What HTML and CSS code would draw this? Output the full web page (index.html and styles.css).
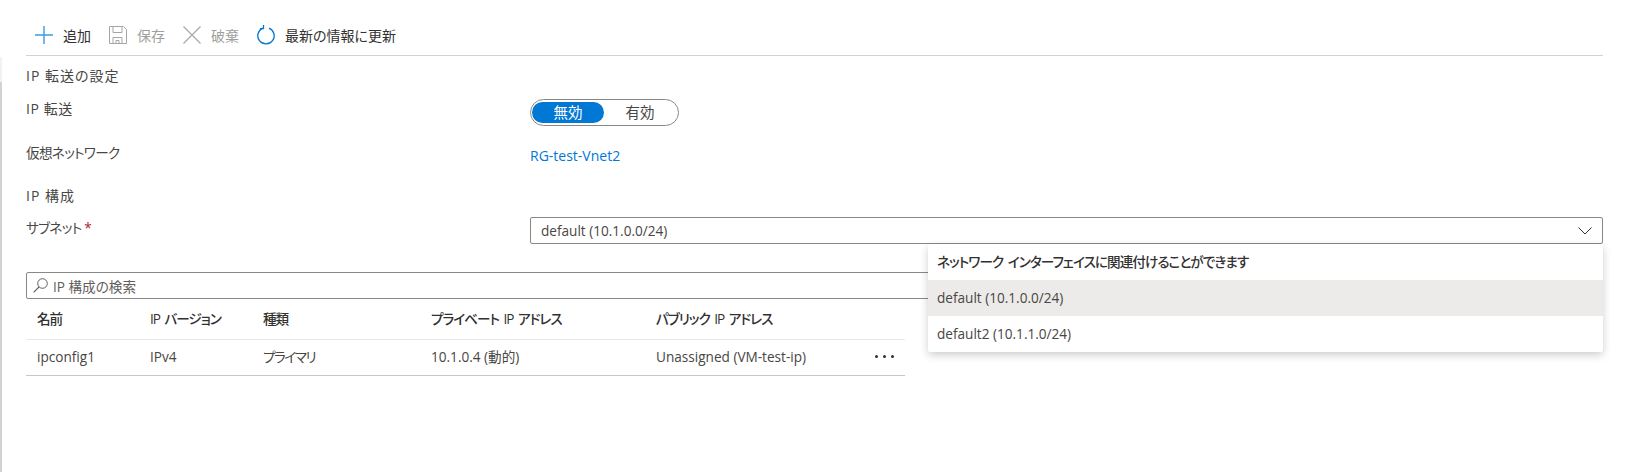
FILE: index.html
```html
<!DOCTYPE html>
<html lang="ja">
<head>
    <meta charset="UTF-8">
    <meta name="viewport" content="width=device-width, initial-scale=1.0">
    <title>IP 構成</title>
    <link rel="stylesheet" href="styles.css">
</head>
<body>
    <div class="side-edge"></div>
    <div class="blade">
        <div class="toolbar">
            <a class="tool">
                <svg width="18" height="18" viewBox="0 0 18 18"><path d="M9 0v18M0 9h18" fill="none" stroke="#3d9be0" stroke-width="1.4"/></svg>
                <span>追加</span>
            </a>
            <a class="tool disabled">
                <svg width="18" height="18" viewBox="0 0 18 18"><path d="M.5.5h14l3 3v14H.5zM4 .5v6h9v-6M4 17.500v-6h9v6M7 17.500v-3h3v3" fill="none" stroke="#a6a6a6" stroke-width="1"/></svg>
                <span>保存</span>
            </a>
            <a class="tool disabled">
                <svg width="18" height="18" viewBox="0 0 18 18"><path d="M.5.5l17 17M17.500.5l-17 17" fill="none" stroke="#a6a6a6" stroke-width="1.1"/></svg>
                <span>破棄</span>
            </a>
            <a class="tool">
                <svg width="18" height="20" viewBox="0 0 18 20"><path d="M12 3.100A8.200 8.200 0 1 1 6 3.100M6.500 0v3.600H2.900" fill="none" stroke="#0078d4" stroke-width="1.3"/></svg>
                <span>最新の情報に更新</span>
            </a>
        </div>

        <div class="section-title first">IP 転送の設定</div>
        <div class="field toggle-row">
            <label class="wide">IP 転送</label>
            <div class="toggle">
                <span class="toggle-opt on">無効</span>
                <span class="toggle-opt">有効</span>
            </div>
        </div>
        <div class="field vnet-row">
            <label class="tight">仮想ネットワーク</label>
            <a class="link">RG-test-Vnet2</a>
        </div>

        <div class="section-title second">IP 構成</div>
        <div class="field subnet-row">
            <label class="tight">サブネット <span class="req">*</span></label>
            <div class="select">
                <span>default (10.1.0.0/24)</span>
                <svg width="14" height="8" viewBox="0 0 14 8"><path d="M.5.500L7 7l6.500-6.500" fill="none" stroke="#323130" stroke-width="1"/></svg>
                <div class="dropdown">
                    <div class="dropdown-head">ネットワーク インターフェイスに関連付けることができます</div>
                    <div class="dropdown-item selected">default (10.1.0.0/24)</div>
                    <div class="dropdown-item">default2 (10.1.1.0/24)</div>
                </div>
            </div>
        </div>

        <div class="search">
            <svg width="15" height="15" viewBox="0 0 15 15"><circle cx="9.500" cy="5.500" r="4.800" fill="none" stroke="#605e5c" stroke-width="1"/><path d="M6 9L.6 14.400" fill="none" stroke="#605e5c" stroke-width="1.100"/></svg>
            <span>IP 構成の検索</span>
        </div>

        <table class="ip-table">
            <thead>
                <tr>
                    <th class="col-name">名前</th>
                    <th class="col-ver">IP バージョン</th>
                    <th class="col-type">種類</th>
                    <th class="col-priv">プライベート IP アドレス</th>
                    <th class="col-pub">パブリック IP アドレス</th>
                    <th></th>
                </tr>
            </thead>
            <tbody>
                <tr>
                    <td>ipconfig1</td>
                    <td>IPv4</td>
                    <td class="kana">プライマリ</td>
                    <td>10.1.0.4 (動的)</td>
                    <td>Unassigned (VM-test-ip)</td>
                    <td class="more"><i></i><i></i><i></i></td>
                </tr>
            </tbody>
        </table>
    </div>
</body>
</html>
```

FILE: styles.css
```css
* {
    box-sizing: border-box;
}
html, body {
    height: 100%;
}
body {
    margin: 0;
    background: white;
    color: #484644;
    font-family: "Open Sans", "Noto Sans CJK JP", sans-serif;
    font-size: 13.6px;
    font-feature-settings: "palt";
    overflow: hidden;
}
.side-edge {
    position: absolute;
    left: 0;
    top: 57px;
    bottom: 0;
    width: 2px;
    background: linear-gradient(#f2f2f2 0, #f2f2f2 25px, #d2d2d2 25px);
}
.blade {
    padding: 0 22px 0 26px;
}
.toolbar {
    display: flex;
    align-items: center;
    height: 56px;
    padding: 15px 0 0 9px;
    border-bottom: 1px solid #d2d2d2;
    font-size: 14px;
    color: #323130;
}
.tool {
    display: flex;
    align-items: center;
    gap: 10px;
    margin-right: 18px;
}
.tool.disabled {
    color: #a19f9d;
}
.section-title {
    font-size: 14px;
    letter-spacing: 1px;
    line-height: 18px;
}
.section-title.first {
    margin-top: 11px;
}
.section-title.second {
    margin-top: 22px;
}
.field {
    display: flex;
}
.field label {
    width: 504px;
    flex-shrink: 0;
    line-height: 18px;
}
.field label.wide {
    font-size: 14px;
    letter-spacing: 0.6px;
}
.field label.tight {
    letter-spacing: -0.7px;
}
.toggle-row {
    margin-top: 14px;
    height: 27px;
}
.toggle-row label {
    margin-top: 1px;
}
.toggle {
    display: flex;
    width: 149px;
    height: 27px;
    padding: 2px 1px;
    border: 1px solid #8a8886;
    border-radius: 14px;
    font-size: 14.5px;
}
.toggle-opt {
    width: 72px;
    line-height: 21px;
    text-align: center;
    border-radius: 11px;
}
.toggle-opt.on {
    background: #0078d4;
    color: white;
}
.vnet-row {
    margin-top: 17px;
    height: 22px;
}
.vnet-row label {
    margin-top: 1px;
}
.link {
    color: #0078d4;
    font-size: 14px;
    line-height: 22px;
    margin-top: 2px;
}
.subnet-row {
    margin-top: 12px;
}
.subnet-row label {
    margin-top: 2px;
}
.req {
    color: #a4262c;
}
.select {
    position: relative;
    display: flex;
    align-items: center;
    justify-content: space-between;
    flex: 1;
    height: 27px;
    padding: 0 10px;
    border: 1px solid #8a8886;
    border-radius: 2px;
}
.dropdown {
    position: absolute;
    top: 26px;
    right: -1px;
    width: 675px;
    background: white;
    border-radius: 2px;
    box-shadow: 0 3px 8px rgba(0, 0, 0, 0.2);
    z-index: 2;
}
.dropdown-head {
    height: 36px;
    line-height: 35px;
    padding-left: 9px;
    font-weight: 500;
    letter-spacing: -0.95px;
    word-spacing: 2px;
    color: #323130;
}
.dropdown-item {
    height: 36px;
    line-height: 35px;
    padding-left: 9px;
}
.dropdown-item.selected {
    background: #edebe9;
}
.search {
    display: flex;
    align-items: center;
    gap: 5px;
    height: 27px;
    margin-top: 28px;
    padding-left: 6px;
    border: 1px solid #8a8886;
    border-radius: 2px;
    color: #605e5c;
}
.ip-table {
    width: 879px;
    margin-top: 1px;
    border-collapse: collapse;
    table-layout: fixed;
}
.ip-table th {
    height: 39px;
    padding: 0 0 3px 11px;
    text-align: left;
    font-weight: 500;
    letter-spacing: -1px;
    word-spacing: 2px;
    color: #323130;
    border-bottom: 1px solid #e8e8e8;
}
.ip-table td {
    height: 36px;
    padding: 0 0 2px 11px;
    border-bottom: 1px solid #c8c6c4;
}
.ip-table td.kana {
    letter-spacing: -1.5px;
}
.col-name {
    width: 113px;
}
.col-ver {
    width: 113px;
}
.col-type {
    width: 168px;
}
.col-priv {
    width: 225px;
}
.col-pub {
    width: 219px;
}
.more {
    white-space: nowrap;
}
.more i {
    display: inline-block;
    width: 3px;
    height: 3px;
    margin: 0 5px 4px 0;
    border-radius: 50%;
    background: #323130;
}
```
